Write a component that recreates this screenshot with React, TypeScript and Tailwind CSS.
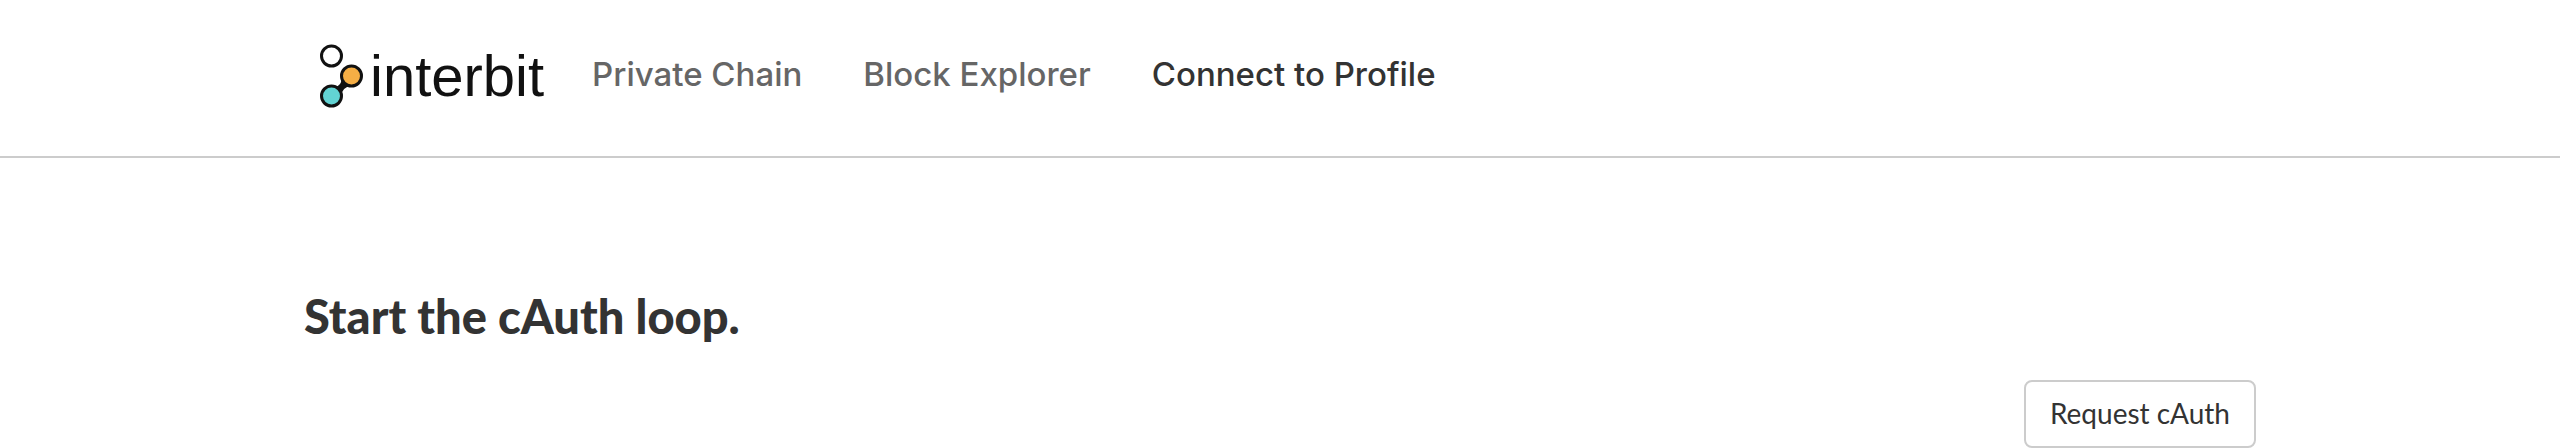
const links = [
  { label: 'Private Chain', active: false },
  { label: 'Block Explorer', active: false },
  { label: 'Connect to Profile', active: true },
]

function Logo() {
  return (
    <a href="#" className="flex items-center gap-1.5 text-[#111111]">
      <svg viewBox="0 0 44 64" className="h-16 w-11" aria-hidden="true">
        <path
          d="M15 43 Q21.500 42 21.500 34 L30 42 Q22.500 43.500 21.500 51 Z"
          fill="#111111"
        />
        <g stroke="#111111" strokeWidth="3">
          <circle cx="11.500" cy="12" r="10" fill="#ffffff" />
          <circle cx="31.500" cy="32" r="10" fill="#f5ae45" />
          <circle cx="11.500" cy="52" r="10" fill="#62d3d3" />
        </g>
      </svg>
      <span className="font-['Liberation_Sans',sans-serif] text-[58px] leading-16">interbit</span>
    </a>
  )
}

export default function App() {
  return (
    <div className="bg-white text-[#333333]">
      <header className="border-b-2 border-[#cccccc]">
        <div className="mx-auto flex w-full max-w-[1952px] items-center gap-12 px-4 pt-11 pb-12">
          <Logo />
          <nav className="flex items-center gap-[61px] pb-1 font-['Inter',sans-serif] text-[33px] leading-10 font-medium">
            {links.map((link) => (
              <a
                key={link.label}
                href="#"
                aria-current={link.active ? 'page' : undefined}
                className={link.active ? 'text-[#333333]' : 'text-[#666666]'}
              >
                {link.label}
              </a>
            ))}
          </nav>
        </div>
      </header>
      <main className="mx-auto flex w-full max-w-[1952px] flex-col pt-[126px]">
        <h1 className="font-['Lato',sans-serif] text-[47px] leading-16 font-black">
          Start the cAuth loop.
        </h1>
        <button
          type="button"
          className="mt-8 self-end rounded-lg border-2 border-[#cccccc] bg-white px-6 pt-[11px] pb-[13px] font-['Lato',sans-serif] text-[28px] leading-10"
        >
          Request cAuth
        </button>
      </main>
    </div>
  )
}
